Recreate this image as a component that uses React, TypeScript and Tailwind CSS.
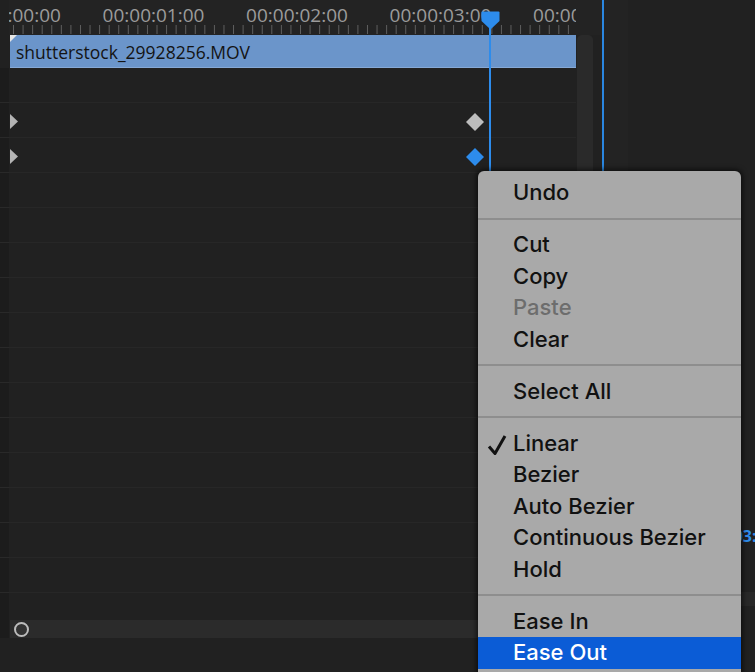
import React from 'react';

type MenuEntry =
  | { kind: 'item'; label: string; disabled?: boolean; checked?: boolean; active?: boolean }
  | { kind: 'sep' };

const menu: MenuEntry[] = [
  { kind: 'item', label: 'Undo' },
  { kind: 'sep' },
  { kind: 'item', label: 'Cut' },
  { kind: 'item', label: 'Copy' },
  { kind: 'item', label: 'Paste', disabled: true },
  { kind: 'item', label: 'Clear' },
  { kind: 'sep' },
  { kind: 'item', label: 'Select All' },
  { kind: 'sep' },
  { kind: 'item', label: 'Linear', checked: true },
  { kind: 'item', label: 'Bezier' },
  { kind: 'item', label: 'Auto Bezier' },
  { kind: 'item', label: 'Continuous Bezier' },
  { kind: 'item', label: 'Hold' },
  { kind: 'sep' },
  { kind: 'item', label: 'Ease In' },
  { kind: 'item', label: 'Ease Out', active: true },
];

const timecodes = ['00:00:00:00', '00:00:01:00', '00:00:02:00', '00:00:03:00', '00:00:04:00'];

// time ruler, clipped at both ends like the panel
const Ruler: React.FC = () => (
  <div className="flex h-[35px] shrink-0 bg-[#232323]">
    <div className="w-[9px] bg-[#212121]" />
    <div className="relative w-[567px] h-[35px] overflow-hidden">
      <div className="flex ml-[-70.75px] h-[31px] leading-[31px] text-[19px] text-[#9b9b9b] font-['Open_Sans',sans-serif]">
        {timecodes.map(t => (
          <span key={t} className="w-[143.5px] shrink-0 text-center">{t}</span>
        ))}
      </div>
      <svg className="absolute left-0 top-0" width="567" height="35">
        {Array.from({ length: 60 }).map((_, i) => {
          const x = 4.5 + i * 9.567;
          return <line key={i} x1={x} x2={x} y1="25" y2="34" stroke="#5f5f5f" strokeWidth="1" />;
        })}
      </svg>
    </div>
  </div>
);

const Triangle = () => (
  <svg width="8" height="15" viewBox="0 0 8 15">
    <polygon points="0,0 8,7.5 0,15" fill="#b4b4b4" />
  </svg>
);

const Diamond: React.FC<{ color: string }> = ({ color }) => (
  <svg width="18" height="18" viewBox="0 0 18 18">
    <polygon points="9,0 18,9 9,18 0,9" fill={color} />
  </svg>
);

const TrackRow: React.FC<{ children?: React.ReactNode }> = ({ children }) => (
  <div className="flex h-[35px] shrink-0">
    <div className="w-[9px] bg-[#1c1c1c] border-b border-[#292929]" />
    <div className="relative flex-1 flex items-center border-b border-[#272727]">{children}</div>
  </div>
);

const ContextMenu: React.FC = () => (
  <div className="absolute left-[478px] top-[171px] w-[263px] rounded-t-[6px] bg-[#a9a9a9] pt-[6px] pb-[8px] shadow-[0_0_5px_2px_rgba(0,0,0,0.55)] font-['Inter',sans-serif] font-medium text-[22px] text-[#111]">
    {menu.map((m, i) =>
      m.kind === 'sep' ? (
        <div key={i} className="h-[20.5px] flex items-center">
          <div className="w-full h-[2px] bg-[#8e8e8e]" />
        </div>
      ) : (
        <div
          key={i}
          className={`relative h-[31.5px] leading-[31.5px] pl-[35px] ${
            m.active ? 'bg-[#0b5cd6] text-white' : m.disabled ? 'text-[#6d6d6d]' : ''
          }`}
        >
          {m.checked && (
            <svg className="absolute left-[9px] top-[6px]" width="20" height="22" viewBox="0 0 20 22">
              <path d="M2 12.5 L8 19.5 L18 2" fill="none" stroke="#111" strokeWidth="3" strokeLinejoin="round" />
            </svg>
          )}
          {m.label}
        </div>
      )
    )}
  </div>
);

const Playhead: React.FC = () => (
  <div className="absolute left-[480px] top-[11px] bottom-0 flex flex-col items-center w-[20px]">
    <svg width="19" height="19" viewBox="0 0 19 19" className="shrink-0">
      <path d="M1.5 0.5 H17.5 Q18.5 0.5 18.5 1.5 V10 L9.5 18.5 L0.5 10 V1.5 Q0.5 0.5 1.5 0.5 Z" fill="#2d8cec" />
    </svg>
    <div className="w-[2px] flex-1 bg-[#2d8cec] -mt-[2px]" />
  </div>
);

export default function App() {
  return (
    <div className="relative w-[755px] h-[672px] overflow-hidden bg-[#212121] font-['Open_Sans',sans-serif]">
      <div className="flex h-full">
        {/* timeline */}
        <div className="w-[602px] flex flex-col shrink-0">
          <div className="flex bg-[#232323]">
            <Ruler />
          </div>
          <div className="flex flex-1">
            <div className="w-[576px] flex flex-col">
              {/* clip */}
              <div className="flex h-[33px] shrink-0">
                <div className="w-[10px]" />
                <div className="relative flex-1 bg-[#6b95ca] border-b border-[#86a9d6] pl-[6px] pt-[2px] h-[33px] leading-[30px] text-[17.5px] text-[#141414]">
                  <svg className="absolute left-0 top-0" width="8" height="8" viewBox="0 0 8 8">
                    <polygon points="0,0 7,0 0,7" fill="#e6e6e6" />
                  </svg>
                  shutterstock_29928256.MOV
                </div>
              </div>
              <TrackRow />
              <TrackRow>
                <div className="ml-[1px] mt-[3px] flex"><Triangle /></div>
                <div className="absolute left-[457px] top-[10px] flex"><Diamond color="#bdbdbd" /></div>
              </TrackRow>
              <TrackRow>
                <div className="ml-[1px] mt-[3px] flex"><Triangle /></div>
                <div className="absolute left-[457px] top-[10px] flex"><Diamond color="#2d8cec" /></div>
              </TrackRow>
              {Array.from({ length: 12 }).map((_, i) => (
                <TrackRow key={i} />
              ))}
              <div className="flex h-[27px] shrink-0">
                <div className="w-[9px] bg-[#1c1c1c]" />
              </div>
              {/* horizontal scrollbar */}
              <div className="flex h-[18px] shrink-0">
                <div className="w-[9px] bg-[#1c1c1c]" />
                <div className="flex-1 ml-[1px] bg-[#2b2b2b] flex items-center pl-[4px]">
                  <div className="w-[15px] h-[15px] rounded-full border-[2.5px] border-[#bcbcbc] bg-[#333]" />
                </div>
              </div>
            </div>
            {/* vertical scroll track */}
            <div className="flex-1 pl-[1px] pr-[9px]">
              <div className="h-full rounded-t-[5px] bg-[#2a2a2a]" />
            </div>
          </div>
        </div>
        <div className="w-[2px] bg-[#2a86e0] shrink-0" />
        {/* right panel */}
        <div className="flex-1 flex">
          <div className="w-[24px] bg-[#232323]" />
          <div className="flex-1 flex flex-col pt-[526px]">
            <div className="ml-[60px] text-[16px] leading-[20px] font-bold text-[#2d8cec] whitespace-nowrap">00:00:03:00</div>
            <div className="mt-[46px] h-[14px] bg-[#282828]" />
          </div>
        </div>
      </div>
      <Playhead />
      <ContextMenu />
    </div>
  );
}
